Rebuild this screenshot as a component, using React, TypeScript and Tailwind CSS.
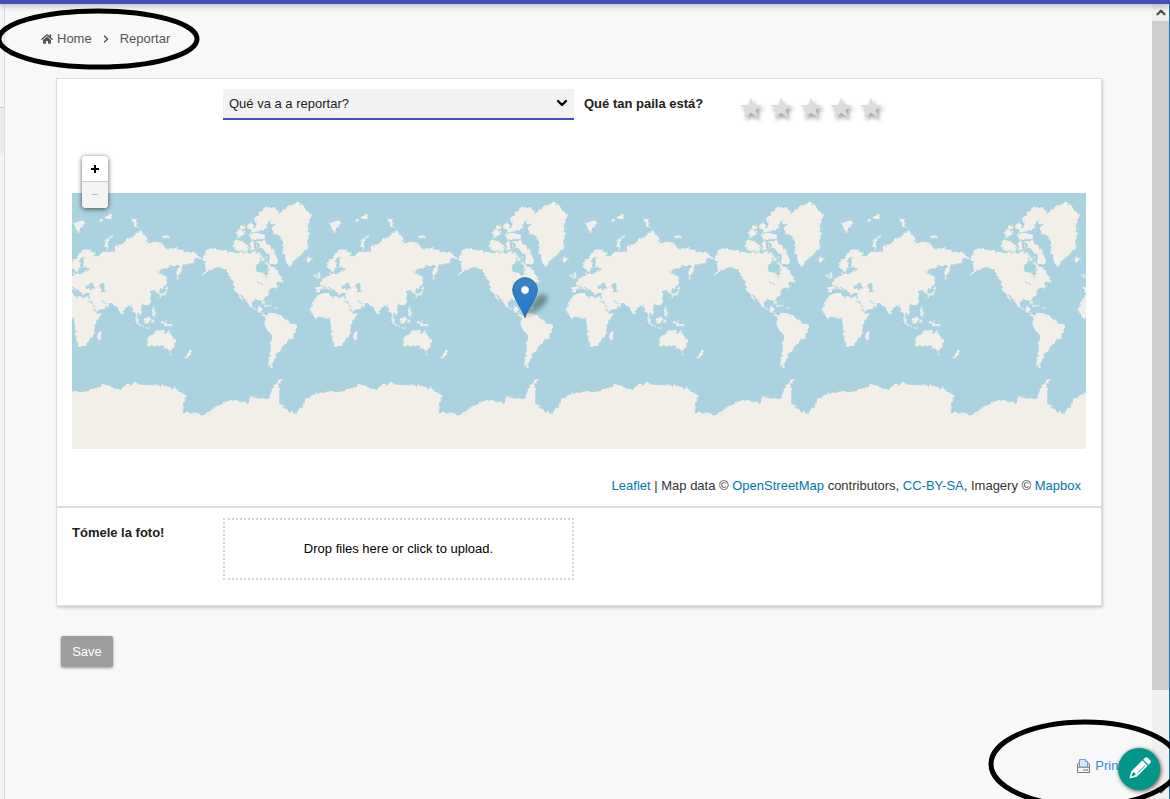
import { ChevronDown, ChevronRight, ChevronUp } from 'lucide-react';
import { FaHome } from 'react-icons/fa';

const continents = [
  // north america
  'M30 191L38 171L53 164L73 171L98 174L118 178L128 181L143 176L168 183L183 174L196 183L204 190L200 203L213 206L222 212L240 223L250 231L256 246L266 256L268 269L252 266L244 274L258 281L246 284L234 281L223 296L216 311L208 321L211 336L206 337L200 322L183 321L176 331L178 346L190 351L195 342L205 341L203 353L212 363L224 367L218 372L208 365L196 354L183 346L168 338L158 326L143 304L138 303L150 328L138 316L123 291L118 276L116 261L103 246L93 229L83 221L63 226L43 236L20 249L38 229L30 216L36 208L24 200Z',
  // arctic islands
  'M183 76L208 46L233 41L253 56L243 71L223 86L213 111L198 116L183 111L188 91Z',
  'M123 121L138 106L153 116L148 128L130 131Z',
  'M158 98L166 92L180 94L174 112L162 110Z',
  'M136 104L150 94L156 104L146 110Z',
  'M166 108L184 104L190 118L170 118Z',
  'M160 122L190 120L212 126L213 138L176 140Z',
  'M118 146L133 141L155 150L163 166L160 178L133 172L118 164Z',
  'M167 146L179 145L180 170L169 172Z',
  'M183 150L190 160L196 172L186 168Z',
  'M186 144L216 144L233 164L246 187L253 206L240 212L223 208L228 188L213 176L200 161Z',
  'M206 190L216 194L214 202L206 200Z',
  // greenland and iceland
  'M230 86L243 66L268 51L283 41L308 29L328 36L338 56L356 66L343 86L346 111L340 141L340 166L318 186L303 196L293 216L286 223L276 206L268 181L268 156L261 131L238 121L230 106L243 96Z',
  'M333 196L343 193L355 199L343 208Z',
  // south america
  'M213 373L223 359L233 361L258 363L276 376L280 386L308 396L306 411L296 436L280 446L263 463L258 476L246 481L243 496L233 516L240 526L228 523L224 506L230 471L233 426L220 411L211 393Z',
  // africa and madagascar
  'M350 341L363 316L378 303L403 299L408 309L423 313L438 311L453 316L461 336L472 355L480 364L493 360L480 378L470 391L470 421L456 436L443 459L423 461L411 426L413 411L410 391L406 376L388 371L363 373L348 357Z',
  'M480 421L490 413L488 431L483 441L476 436Z',
  // europe and asia
  'M366 297L366 281L383 281L380 266L393 253L405 245L407 236L412 243L433 243L440 232L458 228L440 222L432 210L440 197L432 192L425 210L428 222L418 240L408 230L398 222L398 206L413 196L428 176L448 168L470 180L466 190L480 190L496 176L531 176L531 151L541 161L566 141L581 131L606 113L626 131L628 146L666 151L686 166L716 166L741 176L766 176L791 193L771 201L766 211L746 211L731 219L731 235L718 259L714 241L724 216L700 216L691 223L666 231L658 238L675 246L688 251L688 271L673 286L663 291L668 304L660 304L650 292L636 291L642 306L641 321L628 336L606 339L616 356L606 369L596 356L601 381L590 365L581 336L572 338L556 351L551 369L545 360L538 341L516 331L496 326L490 321L498 331L514 331L506 341L476 356L454 316L458 301L430 303L422 288L418 296L410 285L400 278L410 292L398 290L390 278L380 290L372 299Z',
  // british isles
  'M371 231L378 240L380 253L370 255L374 244Z',
  'M363 246L368 243L366 254L361 253Z',
  // islands of the arctic ocean
  'M498 161L503 141L530 121L517 138L507 156L508 168Z',
  'M408 89L428 83L443 88L430 101L420 121L413 106Z',
  'M580 76L593 81L603 106L588 96Z',
  'M482 82L492 76L496 83L486 86ZM502 70L514 65L524 74L508 80Z',
  'M672 130L684 128L700 134L684 138Z',
  // japan and the indies
  'M685 276L692 288L682 305L662 312L664 306L680 295Z',
  'M644 346L649 344L650 358L656 371L650 372L645 360Z',
  'M616 381L636 371L636 389L621 393Z',
  'M588 369L600 382L611 398L602 396L592 382Z',
  'M611 398L636 402L634 406L612 402Z',
  'M641 381L650 379L646 392L642 394Z',
  'M666 386L686 386L706 403L691 402L678 398Z',
  // oceania
  'M628 433L646 426L658 413L676 411L678 423L686 423L691 409L701 429L711 443L709 463L696 473L684 469L676 459L661 456L631 463Z',
  'M693 479L700 479L697 486Z',
  'M754 469L764 474L756 486L742 498L740 493L752 481Z',
  // caribbean
  'M208 335L225 336L240 343L222 341ZM243 343L252 344L250 348L242 347Z',
  // antarctica
  'M-2 659L36 666L48 651L68 641L113 621L148 626L166 631L168 609L203 616L218 619L230 613L230 591L243 576L250 563L268 555L254 576L256 631L288 659L308 659L330 636L333 621L368 601L418 594L448 594L468 589L496 573L520 583L546 591L566 577L591 569L626 578L676 575L706 586L748 608L734 636L734 658L776 659L776 790L-8 790L-8 659Z',
];

const waters = [
  'M183 221L198 203L213 206L223 226L218 253L208 241L190 236Z',
  'M443 276L460 272L473 285L458 289L443 287Z',
  'M486 273L498 269L500 297L490 299Z',
  'M188 268L200 266L214 276L206 278Z',
];

const stars = [1, 2, 3, 4, 5];

function WorldMap() {
  return (
    <svg className="block w-full h-64" role="img" aria-label="World map">
      <defs>
        <filter id="coast" filterUnits="userSpaceOnUse" x="-20" y="-20" width="300" height="300">
          <feTurbulence type="fractalNoise" baseFrequency="0.25" numOctaves="2" seed="4" />
          <feDisplacementMap in="SourceGraphic" scale="5" xChannelSelector="R" yChannelSelector="G" />
        </filter>
        <pattern id="world" x="122" width="256" height="256" patternUnits="userSpaceOnUse">
          <rect width="256" height="256" fill="#aad3df" />
          <g filter="url(#coast)">
            {[0, -768].map((shift) => (
              <g key={shift} transform={`scale(0.33333) translate(${shift} 0)`}>
                {continents.map((d) => (
                  <path key={d} d={d} fill="#f2efe9" />
                ))}
                {waters.map((d) => (
                  <path key={d} d={d} fill="#aad3df" />
                ))}
              </g>
            ))}
          </g>
          <rect y="225" width="256" height="31" fill="#f2efe9" />
        </pattern>
      </defs>
      <rect width="100%" height="256" fill="url(#world)" />
    </svg>
  );
}

function Marker() {
  return (
    <svg width="48" height="42" viewBox="0 0 48 42" aria-hidden="true">
      <defs>
        <linearGradient id="pin" x1="0" y1="0" x2="0" y2="1">
          <stop offset="0" stopColor="#3883c6" />
          <stop offset="1" stopColor="#1f7bd0" />
        </linearGradient>
        <filter id="soft" x="-30%" y="-30%" width="160%" height="160%">
          <feGaussianBlur stdDeviation="2.5" />
        </filter>
      </defs>
      <path d="M13 40L22 23Q29 15 35 18Q38 22 29 31Z" fill="#000" opacity="0.35" filter="url(#soft)" />
      <path
        d="M13 40.500C11 33 1 21 .7 13A12.200 12.200 0 0 1 25.300 13C25 21 15 33 13 40.500Z"
        fill="url(#pin)"
        stroke="#2e6c97"
      />
      <circle cx="13" cy="13" r="4.200" fill="#fff" stroke="#2e6c97" strokeWidth="0.600" />
    </svg>
  );
}

function PrinterIcon() {
  return (
    <svg width="15" height="16" viewBox="0 0 15 16" aria-hidden="true">
      <path d="M1.500 6.500L3 4.500h9l1.500 2v8h-12z" fill="#dcdcdc" stroke="#77777b" />
      <path d="M3.500 1.500h6l2 2V9h-8z" fill="#d3e9fb" stroke="#6f9fcb" />
      <path d="M9.500 1.500v2h2" fill="#fff" stroke="#6f9fcb" />
      <path d="M2 9.500h11V14H2z" fill="#f2f2f2" />
      <path d="M2 9.500h11" stroke="#9a9a9a" />
      <path d="M7.500 12h2" stroke="#e2574c" strokeWidth="1.500" />
      <path d="M10 12h2" stroke="#5fb84a" strokeWidth="1.500" />
    </svg>
  );
}

function PencilIcon() {
  return (
    <svg width="26" height="26" viewBox="0 0 24 24" aria-hidden="true">
      <g transform="rotate(45 12 12)" fill="#fff">
        <path d="M8.500 1Q8.500 -1 10.500 -1h3Q15.500 -1 15.500 1V3h-7z" />
        <path d="M8.500 4.200h7V18.500L12 24.500L8.500 18.500z" />
        <path d="M10.500 17.500h3L12.800 21h-1.600z" fill="#009688" />
        <path d="M13.700 6v9.500" stroke="#009688" strokeWidth="0.800" />
      </g>
    </svg>
  );
}

function Breadcrumb() {
  return (
    <nav aria-label="Breadcrumb" className="flex items-center h-5 pl-9 text-[#555]">
      <a href="#home" className="flex items-center gap-1">
        <FaHome className="w-3 h-3" />
        Home
      </a>
      <ChevronRight className="w-3 h-3 mx-2" strokeWidth={3} />
      <a href="#reportar">Reportar</a>
    </nav>
  );
}

function ReportFields() {
  return (
    <div className="grid grid-cols-[151px_351px_1fr] px-[15px] pt-[10px]">
      <div className="relative col-start-2">
        <select
          aria-label="Qué va a a reportar?"
          className="block w-full h-[31px] appearance-none bg-[#f2f2f2] border-b-2 border-[#3f51b5] px-1.5 text-[#212121]"
        >
          <option>Qué va a a reportar?</option>
        </select>
        <ChevronDown className="absolute right-1 top-1.5 w-4 h-4 text-black pointer-events-none" strokeWidth={3.5} />
      </div>
      <div role="radiogroup" aria-labelledby="rating" className="flex pl-[10px]">
        <span id="rating" className="w-[155px] leading-[30px] font-bold text-[#212121]">Qué tan paila está?</span>
        <div className="flex gap-[6px] pt-[7px]">
          {stars.map((star) => (
            <label key={star} className="relative w-6 h-6">
              <input
                type="radio"
                name="rating"
                value={star}
                aria-label={`${star}`}
                className="absolute inset-0 w-full h-full opacity-0"
              />
              <svg
                viewBox="0 0 24 24"
                className="w-6 h-6 fill-[#ddd] drop-shadow-[2px_3px_2px_rgba(0,0,0,0.4)]"
              >
                <path d="M12 1.500L14.700 9H23L16.600 13.700L19 21.500L12 17L5 21.500L7.400 13.700L1 9h8.300z" />
              </svg>
            </label>
          ))}
        </div>
      </div>
    </div>
  );
}

function MapPanel() {
  return (
    <div className="relative mx-[15px] mt-[73px]">
      <WorldMap />
      <div className="absolute left-[440px] top-[84px]">
        <Marker />
      </div>
      <div className="absolute left-[10px] top-[-37px] w-[26px] rounded bg-white shadow-[0_1px_5px_rgba(0,0,0,0.65)] overflow-hidden">
        <button
          type="button"
          aria-label="Zoom in"
          className="flex items-center justify-center w-full h-[26px] border-b border-[#ccc]"
        >
          <svg width="8" height="8" viewBox="0 0 8 8"><path d="M0 4h8M4 0v8" stroke="#000" strokeWidth="2" /></svg>
        </button>
        <button
          type="button"
          aria-label="Zoom out"
          className="flex items-center justify-center w-full h-[26px] bg-[#f4f4f4]"
        >
          <svg width="6" height="6" viewBox="0 0 6 6"><path d="M0 2.500h6" stroke="#bbb" /></svg>
        </button>
      </div>
      <p className="mt-[27px] mb-[10px] pr-[5px] text-right leading-5 text-[#333]">
        <a href="#leaflet" className="text-[#0078a8]">Leaflet</a> | Map data ©{' '}
        <a href="#osm" className="text-[#0078a8]">OpenStreetMap</a> contributors,{' '}
        <a href="#license" className="text-[#0078a8]">CC-BY-SA</a>, Imagery ©{' '}
        <a href="#mapbox" className="text-[#0078a8]">Mapbox</a>
      </p>
    </div>
  );
}

function PhotoRow() {
  return (
    <div className="grid grid-cols-[151px_351px] px-[15px] pt-[10px] pb-[25px] border-t-2 border-[#ddd]">
      <span id="photo" className="leading-[30px] font-bold text-[#212121]">Tómele la foto!</span>
      <button
        type="button"
        aria-describedby="photo"
        className="h-[62px] border-2 border-dotted border-[#d3d3d3] text-black"
      >
        Drop files here or click to upload.
      </button>
    </div>
  );
}

export default function App() {
  return (
    <div className="relative flex flex-col h-screen overflow-hidden bg-[#f8f8f8] font-['Liberation_Sans',Arial,sans-serif] text-[13px]">
      <header className="relative z-10 h-1 shrink-0 bg-[#3f51b5] shadow-[0_1px_6px_rgba(0,0,0,0.4)]" />
      <div className="flex flex-1 min-h-0">
        <aside className="w-[5px] border-r border-[#dcdce0] bg-[#f3f4fa]">
          <div className="mt-[103px] h-[46px] border-t border-[#ccc] bg-[#e9e9ee]" />
        </aside>
        <main className="flex flex-col flex-1 min-w-0 pt-[25px]">
          <Breadcrumb />
          <section className="mt-[29px] ml-[51px] mr-[50px] border border-[#ddd] bg-white shadow-[1px_2px_3px_rgba(0,0,0,0.18)]">
            <ReportFields />
            <MapPanel />
            <PhotoRow />
          </section>
          <button
            type="button"
            className="self-start mt-[30px] ml-14 w-[52px] h-[31px] rounded-xs bg-[#9e9e9e] text-white shadow-[0_1px_3px_rgba(0,0,0,0.4)]"
          >
            Save
          </button>
          <a href="#print" className="flex items-center self-end gap-1 mt-auto mb-[23px] mr-[30px] leading-5 text-[#2d8ceb]">
            <PrinterIcon />
            Print
          </a>
        </main>
        <div className="flex flex-col justify-between w-[18px] border-r border-[#1a7bc4] bg-[#f0f0f0] text-[#505050]" aria-hidden="true">
          <ChevronUp className="w-3.5 h-[17px] mx-auto" strokeWidth={4} />
          <div className="h-[669px] bg-[#cdcdcd]" />
          <div className="flex-1" />
          <ChevronDown className="w-3.5 h-[17px] mx-auto" strokeWidth={4} />
        </div>
      </div>

      {/* hand drawn rings */}
      <svg className="absolute left-0 top-0 w-[210px] h-20 z-20 pointer-events-none" aria-hidden="true">
        <ellipse cx="98" cy="39" rx="99" ry="28" fill="none" stroke="#000" strokeWidth="5" />
      </svg>
      <svg className="absolute right-0 bottom-0 w-[190px] h-[90px] z-20 pointer-events-none" aria-hidden="true">
        <ellipse cx="105" cy="55" rx="94" ry="42" fill="none" stroke="#000" strokeWidth="5" />
      </svg>
      <button
        type="button"
        aria-label="Edit"
        className="absolute right-[10px] bottom-[9px] z-30 flex items-center justify-center w-[42px] h-[42px] rounded-full bg-[#009688] shadow-[1px_1px_4px_rgba(0,0,0,0.7)]"
      >
        <PencilIcon />
      </button>
    </div>
  );
}
